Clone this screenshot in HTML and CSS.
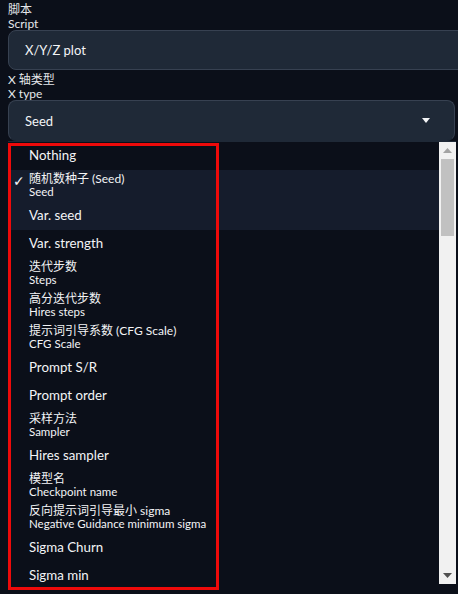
FILE: index.html
```html
<!DOCTYPE html>
<html lang="zh">
<head>
<meta charset="utf-8">
<title>X/Y/Z plot</title>
<link rel="stylesheet" href="styles.css">
</head>
<body>
<div class="page">
  <div class="field">
    <div class="label"><span class="ln">脚本</span><span class="ln">Script</span></div>
    <div class="box script">X/Y/Z plot</div>
  </div>
  <div class="field second">
    <div class="label"><span class="ln">X 轴类型</span><span class="ln">X type</span></div>
    <div class="box select">
      <span>Seed</span>
      <svg class="caret" width="8" height="5" viewBox="0 0 8 5"><path d="M0 0H8L4 5Z" fill="#f3f4f6"/></svg>
    </div>
  </div>
  <div class="dropdown">
    <ul class="options">
      <li class="opt">Nothing</li>
      <li class="opt two hl"><span class="check">✓</span><span class="main">随机数种子 (Seed)</span><span class="sub">Seed</span></li>
      <li class="opt hl">Var. seed</li>
      <li class="opt">Var. strength</li>
      <li class="opt two"><span class="main">迭代步数</span><span class="sub">Steps</span></li>
      <li class="opt two"><span class="main">高分迭代步数</span><span class="sub">Hires steps</span></li>
      <li class="opt two"><span class="main">提示词引导系数 (CFG Scale)</span><span class="sub">CFG Scale</span></li>
      <li class="opt">Prompt S/R</li>
      <li class="opt">Prompt order</li>
      <li class="opt two"><span class="main">采样方法</span><span class="sub">Sampler</span></li>
      <li class="opt">Hires sampler</li>
      <li class="opt two"><span class="main">模型名</span><span class="sub">Checkpoint name</span></li>
      <li class="opt two"><span class="main">反向提示词引导最小 sigma</span><span class="sub">Negative Guidance minimum sigma</span></li>
      <li class="opt">Sigma Churn</li>
      <li class="opt">Sigma min</li>
    </ul>
    <div class="scrollbar">
      <div class="sb-btn"><svg width="9" height="5" viewBox="0 0 9 5"><path d="M0 5H9L4.5 0Z" fill="#a3a3a3"/></svg></div>
      <div class="sb-track"><div class="sb-thumb"></div></div>
      <div class="sb-btn"><svg width="9" height="5" viewBox="0 0 9 5"><path d="M0 0H9L4.5 5Z" fill="#505050"/></svg></div>
    </div>
  </div>
  <div class="annot"></div>
</div>
</body>
</html>
```
FILE: styles.css
```css
* { box-sizing: border-box; }
html, body { margin: 0; padding: 0; background: #0b0f19; overflow: hidden; }
body {
  width: 458px;
  height: 594px;
  font-family: "Lato", "Noto Sans CJK SC", sans-serif;
  color: #f3f4f6;
}
.page {
  position: relative;
  padding: 3px 3px 0 8px;
  display: flex;
  flex-direction: column;
}
.field { display: flex; flex-direction: column; }
.field.second { margin-top: 3px; }
.label {
  display: flex;
  flex-direction: column;
  font-size: 12px;
  line-height: 14px;
  color: #e5e7eb;
  margin-bottom: -1px;
}
.box {
  background: #1f2937;
  border: 1px solid #374151;
  border-radius: 8px;
  display: flex;
  align-items: center;
  font-size: 13px;
  padding: 0 24px 0 16px;
}
.script { height: 40px; margin-right: -24px; }
.select { height: 41px; justify-content: space-between; border-bottom-color: #1f2937; }
.dropdown {
  display: flex;
  height: 443px;
  margin-right: -1px;
  border-top: 1px solid #1f2937;
  background: #0b0f19;
}
.options {
  list-style: none;
  margin: 0;
  padding: 0;
  flex: 1;
  overflow: hidden;
}
.opt {
  position: relative;
  height: 28px;
  line-height: 27px;
  padding-left: 21px;
  font-size: 13.3px;
  white-space: nowrap;
}
.opt.two {
  height: 32px;
  line-height: normal;
  padding-top: 2px;
  display: flex;
  flex-direction: column;
}
.opt .main { font-size: 12px; line-height: 14px; }
.opt .sub { font-size: 11.5px; line-height: 12px; }
.opt.hl { background: #151c2c; }
.check {
  position: absolute;
  left: 5px;
  top: 4px;
  font-size: 14px;
  line-height: 14px;
  font-family: "DejaVu Sans", sans-serif;
}
.scrollbar {
  width: 17px;
  background: #f1f1f1;
  display: flex;
  flex-direction: column;
}
.sb-btn {
  height: 17px;
  display: flex;
  align-items: center;
  justify-content: center;
}
.sb-track { flex: 1; padding: 0 2px; }
.sb-thumb { height: 77px; background: #c1c1c1; }
.annot {
  position: absolute;
  left: 8px;
  top: 143px;
  width: 211px;
  height: 447px;
  border: 3px solid #ee0a0a;
}
```
